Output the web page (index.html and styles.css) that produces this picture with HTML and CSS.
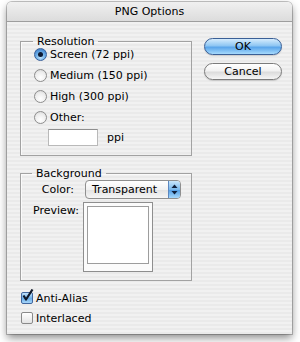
FILE: index.html
```html
<!DOCTYPE html>
<html lang="en">
<head>
  <meta charset="UTF-8" />
  <meta name="viewport" content="width=device-width, initial-scale=1.0" />
  <title>PNG Options</title>
  <link rel="stylesheet" href="styles.css">
</head>
<body>
  <div class="window">
    <div class="titlebar">PNG Options</div>

    <div class="content">
      <div class="top">

        <div class="groups">
          <fieldset class="group group-res">
            <legend>Resolution</legend>
            <div class="rows">
              <div class="row"><span class="radio on"></span>Screen (72 ppi)</div>
              <div class="row"><span class="radio"></span>Medium (150 ppi)</div>
              <div class="row"><span class="radio"></span>High (300 ppi)</div>
              <div class="row"><span class="radio"></span>Other:</div>
              <div class="row-field"><span class="field"></span>ppi</div>
            </div>
          </fieldset>

          <fieldset class="group group-bg">
            <legend>Background</legend>
            <div class="bg-grid">
              <span class="lbl">Color:</span>
              <div class="popup">
                <span class="popup-text">Transparent</span>
                <span class="popup-arrows">
                  <svg width="7" height="11" viewBox="0 0 7 11">
                    <path d="M3.5 0.5 L6.5 4 L0.5 4 Z" fill="#0f1f3a"/>
                    <path d="M3.5 10.5 L6.5 7 L0.5 7 Z" fill="#0f1f3a"/>
                  </svg>
                </span>
              </div>
              <span class="lbl lbl-top">Preview:</span>
              <div class="preview"><div class="preview-inner"></div></div>
            </div>
          </fieldset>
        </div>

        <div class="buttons">
          <button class="btn btn-default">OK</button>
          <button class="btn">Cancel</button>
        </div>

      </div>

      <div class="checks">
        <div class="check-row">
          <span class="check on">
            <svg width="13" height="13" viewBox="0 0 13 13">
              <path d="M2.5 6.5 L5 10.5 L11.5 0.5" fill="none" stroke="#101828" stroke-width="2.2" stroke-linejoin="round"/>
            </svg>
          </span>Anti-Alias
        </div>
        <div class="check-row"><span class="check"></span>Interlaced</div>
      </div>
    </div>
  </div>
</body>
</html>
```

FILE: styles.css
```css
* {
  margin: 0;
  padding: 0;
  box-sizing: border-box;
}

body {
  margin: 0;
  width: 300px;
  height: 342px;
  background: #fff;
  font-family: "DejaVu Sans", "Liberation Sans", sans-serif;
  font-size: 11px;
  color: #000;
  overflow: hidden;
}

.window {
  margin: 2px 0 0 7px;
  width: 285px;
  height: 332px;
  border-radius: 5px 5px 0 0;
  background: repeating-linear-gradient(to bottom, #f1f1f1 0, #f1f1f1 2px, #eaeaea 2px, #eaeaea 4px);
  box-shadow: 0 0 0 1px rgba(0, 0, 0, 0.22), 0 4px 9px rgba(0, 0, 0, 0.45);
  overflow: hidden;
}

.titlebar {
  height: 20px;
  line-height: 19px;
  text-align: center;
  font-size: 11px;
  background: linear-gradient(to bottom, #f0f0f0, #dcdcdc);
  border-bottom: 1px solid #9e9e9e;
}

.content {
  padding: 0 10px 0 13px;
}

.top {
  display: flex;
  gap: 12px;
}

.groups {
  width: 172px;
}

.group {
  border: 1px solid #a2a2a2;
  box-shadow: inset 1px 1px 0 #fafafa;
  padding: 0 0 0 13px;
}

.group legend {
  margin-left: -1px;
  padding: 0 4px;
  line-height: 13px;
}

.group-res {
  margin-top: 13px;
  padding-bottom: 9px;
}

.rows {
  margin-top: -4px;
}

.row {
  display: flex;
  align-items: center;
  height: 21px;
  gap: 3px;
}

.radio {
  width: 13px;
  height: 13px;
  border-radius: 50%;
  border: 1px solid #8d8d8d;
  background: radial-gradient(circle at 50% 70%, #ffffff 0, #ececec 60%, #cfcfcf 100%);
  position: relative;
}

.radio.on {
  border-color: #39609a;
  background: radial-gradient(circle at 50% 75%, #bfe3fb 0, #6fb0e8 45%, #2e6fbf 100%);
}

.radio.on::after {
  content: "";
  position: absolute;
  left: 3px;
  top: 3px;
  width: 5px;
  height: 5px;
  border-radius: 50%;
  background: #0d1a33;
}

.row-field {
  display: flex;
  align-items: center;
  gap: 9px;
  margin: 1px 0 0 14px;
}

.field {
  width: 50px;
  height: 17px;
  background: #fff;
  border: 1px solid #b9b9b9;
  border-top-color: #8e8e8e;
}

.group-bg {
  margin-top: 11px;
  padding: 0 0 8px 12px;
}

.bg-grid {
  display: grid;
  grid-template-columns: 41px auto;
  column-gap: 9px;
  row-gap: 3px;
  align-items: center;
}

.lbl {
  text-align: right;
}

.lbl-top {
  align-self: start;
  padding-top: 2px;
}

.popup {
  display: flex;
  width: 96px;
  height: 19px;
  margin-left: 2px;
  border: 1px solid #8f8f8f;
  border-radius: 4px;
  overflow: hidden;
  background: linear-gradient(to bottom, #ffffff, #f1f1f1 50%, #e2e2e2 51%, #f5f5f5);
}

.popup-text {
  flex: 1;
  padding-left: 6px;
  line-height: 17px;
}

.popup-arrows {
  width: 12px;
  display: flex;
  align-items: center;
  justify-content: center;
  border-left: 1px solid #5c87c0;
  background: linear-gradient(to bottom, #c9e6fb, #7ab8ec 50%, #4f9be3 51%, #a6d8fb);
}

.preview {
  width: 70px;
  height: 70px;
  border: 1px solid #8e8e8e;
  background: #fbfbfb;
  padding: 3px 3px 7px 3px;
}

.preview-inner {
  width: 100%;
  height: 100%;
  border: 1px solid #9d9d9d;
  background: #fff;
}

.buttons {
  display: flex;
  flex-direction: column;
  gap: 8px;
  padding-top: 16px;
}

.btn {
  width: 78px;
  height: 17px;
  border-radius: 9px;
  border: 1px solid #7b7b7b;
  font-family: inherit;
  font-size: 11px;
  color: #000;
  background: linear-gradient(to bottom, #ffffff 0, #f2f2f2 45%, #dcdcdc 55%, #f6f6f6 100%);
  box-shadow: 0 1px 1px rgba(0, 0, 0, 0.15);
}

.btn-default {
  border-color: #3a5f96;
  background: linear-gradient(to bottom, #d6ecfd 0, #8ec6f3 45%, #5aa5ea 55%, #a6dafd 100%);
}

.checks {
  padding: 7px 0 0 1px;
}

.check-row {
  display: flex;
  align-items: center;
  height: 20px;
  gap: 3px;
}

.check {
  width: 12px;
  height: 12px;
  border: 1px solid #8a8a8a;
  border-radius: 2px;
  background: linear-gradient(to bottom, #ffffff, #e4e4e4);
  position: relative;
}

.check.on {
  border-color: #41679f;
  background: linear-gradient(to bottom, #c3e2fa, #6aaee9 55%, #a7d6fa);
}

.check svg {
  position: absolute;
  left: -1px;
  top: -4px;
}
```
